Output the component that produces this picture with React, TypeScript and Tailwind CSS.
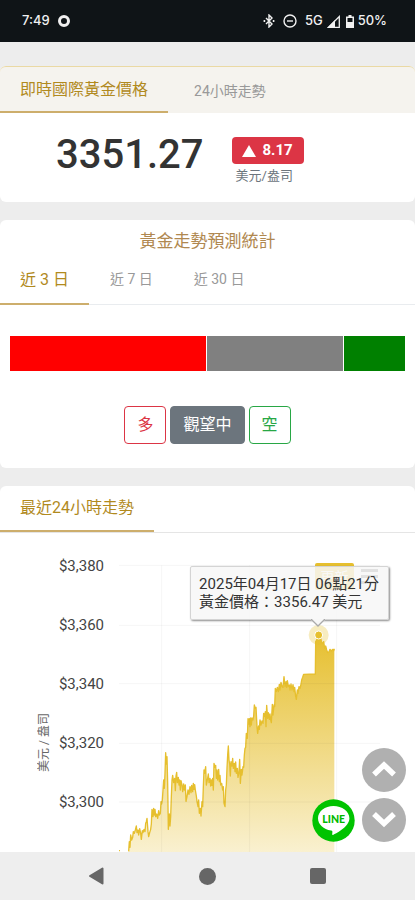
import React from "react";

type Point = [number, number];

const trend: Point[] = [
  [56, 634], [58, 605], [60, 622], [62, 585], [65, 600], [68, 592], [70, 575], [73, 580], [76, 570], [79, 558], [81, 578], [84, 570], [86, 585], [89, 566], [92, 580], [94, 598], [97, 572], [99, 578], [102, 568], [105, 575], [107, 550], [109, 545], [111, 535], [114, 575], [116, 590], [119, 578], [122, 568], [124, 552], [126, 508], [129, 530], [131, 505], [133, 525], [135, 508], [137, 530], [140, 522], [143, 535], [146, 512], [148, 525], [151, 520], [153, 485], [155, 492], [157, 480], [159, 450], [161, 420], [163, 445], [165, 400], [167, 338], [169, 372], [171, 350], [173, 430], [175, 568], [178, 522], [180, 558], [182, 530], [184, 470], [186, 420], [188, 406], [191, 428], [194, 415], [196, 452], [198, 408], [200, 397], [202, 428], [205, 412], [207, 435], [209, 420], [211, 450], [213, 422], [216, 435], [218, 455], [221, 432], [223, 450], [226, 435], [228, 484], [231, 470], [234, 450], [237, 463], [240, 440], [243, 458], [245, 436], [248, 455], [250, 430], [252, 448], [254, 434], [256, 450], [259, 468], [261, 484], [264, 500], [266, 480], [268, 520], [271, 505], [273, 528], [276, 485], [278, 500], [280, 440], [282, 390], [284, 400], [287, 380], [289, 435], [292, 420], [295, 402], [297, 428], [300, 415], [302, 438], [304, 420], [306, 436], [308, 415], [310, 450], [312, 370], [315, 382], [317, 376], [319, 415], [321, 390], [323, 420], [326, 388], [328, 425], [330, 406], [332, 435], [335, 430], [338, 450], [340, 440], [342, 490], [345, 500], [347, 450], [349, 435], [351, 385], [353, 345], [355, 318], [357, 360], [359, 372], [361, 408], [363, 365], [366, 378], [368, 355], [370, 385], [373, 370], [375, 395], [377, 366], [379, 400], [382, 385], [384, 412], [387, 395], [389, 358], [391, 430], [394, 388], [396, 405], [399, 380], [401, 382], [403, 345], [405, 325], [407, 322], [409, 280], [412, 295], [414, 236], [416, 252], [418, 236], [420, 260], [422, 234], [424, 255], [426, 234], [429, 240], [431, 228], [433, 195], [436, 205], [438, 202], [441, 260], [443, 280], [446, 258], [448, 268], [450, 240], [453, 255], [456, 243], [459, 250], [461, 220], [464, 230], [466, 215], [468, 260], [470, 196], [473, 235], [475, 218], [478, 238], [480, 222], [482, 240], [484, 248], [487, 193], [489, 225], [492, 195], [494, 200], [496, 145], [499, 155], [502, 142], [505, 155], [508, 133], [510, 150], [513, 127], [516, 140], [519, 142], [522, 110], [525, 140], [528, 125], [530, 142], [532, 122], [535, 140], [538, 135], [540, 150], [543, 132], [546, 150], [549, 134], [552, 155], [554, 142], [557, 170], [559, 178], [562, 150], [564, 160], [567, 140], [570, 145], [572, 138], [575, 120], [578, 112], [581, 103], [616, 102], [617, 5], [620, 0], [624, -24], [627, 0], [631, -12], [635, 8], [638, 10], [641, 5], [644, 25], [647, 18], [650, 30], [653, 38], [657, 35], [660, 28], [664, 33], [668, 28], [671, 32], [673, 26],
];

const line = trend.map(([x, y], i) => `${i ? "L" : "M"}${x} ${y}`).join(" ");
const area = `${line} L673 700 L56 700 Z`;

const ticks = ["$3,380", "$3,360", "$3,340", "$3,320", "$3,300"];

function StatusBar() {
  return (
    <header className="flex h-[42px] shrink-0 items-center justify-between bg-[#0f1417] pl-[22px] pr-7 font-['Inter',sans-serif] text-[13px] font-medium text-[#f0f0f0]">
      <div className="flex items-center gap-2">
        <span>7:49</span>
        <span className="size-3 rounded-full border-[3px] border-[#f0f0f0]" />
      </div>
      <div className="flex items-center">
        <svg className="mr-2 h-[14px] w-3" viewBox="0 0 12 14" fill="none" stroke="#f0f0f0" strokeWidth="1.4" aria-hidden="true">
          <path d="M3 4l6 6-3 3V1l3 3-6 6" />
          <path d="M0.6 7h1.6M9.8 7h1.6" strokeWidth="1.8" />
        </svg>
        <svg className="mr-2 size-[14px]" viewBox="0 0 14 14" fill="none" stroke="#f0f0f0" strokeWidth="1.4" aria-hidden="true">
          <circle cx="7" cy="7" r="6" />
          <path d="M4 7h6" />
        </svg>
        <span className="mr-1">5G</span>
        <svg className="mr-1.5 size-[13px]" viewBox="0 0 13 13" aria-hidden="true">
          <path d="M12.3 1.5v10.8H1.5z" fill="none" stroke="#f0f0f0" strokeWidth="1.3" />
          <path d="M0 13L8 5v8z" fill="#f0f0f0" />
        </svg>
        <svg className="mr-1 h-[13px] w-2" viewBox="0 0 8 13" aria-hidden="true">
          <path d="M2.5 0h3v1.5H8V13H0V1.5h2.5zM1.5 3v4h5V3z" fill="#f0f0f0" fillRule="evenodd" />
        </svg>
        <span>50%</span>
      </div>
    </header>
  );
}

function PriceCard() {
  return (
    <section className="rounded-md bg-white">
      <div className="flex h-[47px] gap-1.5 rounded-t-md border-t border-[#ead9a4] bg-[#f5f3ee]" role="tablist">
        <button role="tab" aria-selected="true" className="border-b-2 border-[#cdae6c] px-5 pt-0.5 text-base text-[#b18a1e]">
          即時國際黃金價格
        </button>
        <button role="tab" aria-selected="false" className="px-5 pt-0.5 text-sm text-[#999]">
          24小時走勢
        </button>
      </div>
      <div className="flex h-[89px] items-start gap-7 pl-14 pt-5">
        <strong className="pt-0.5 text-[40px] leading-10 font-medium text-[#333]">3351.27</strong>
        <div className="flex flex-col items-start pt-1">
          <span className="flex h-[27px] w-[72px] items-center justify-center gap-1.5 rounded bg-[#dc3545] text-[15px] font-bold text-white">
            <svg className="h-3 w-[14px]" viewBox="0 0 14 12" aria-hidden="true">
              <path d="M7 0l7 12H0z" fill="white" />
            </svg>
            8.17
          </span>
          <span className="pl-1 text-[13px] leading-6 text-[#6c757d]">美元/盎司</span>
        </div>
      </div>
    </section>
  );
}

function ForecastCard() {
  return (
    <section className="rounded-md bg-white">
      <h2 className="pt-[9px] text-center text-[17px] leading-6 text-[#b08850]">黃金走勢預測統計</h2>
      <div className="flex h-[52px] gap-px border-b border-[#e9ecef]" role="tablist">
        <button role="tab" aria-selected="true" className="-mb-px border-b-2 border-[#cdae6c] px-5 pt-1 text-base text-[#b18a1e]">
          近 3 日
        </button>
        <button role="tab" aria-selected="false" className="px-5 text-sm text-[#999]">
          近 7 日
        </button>
        <button role="tab" aria-selected="false" className="px-5 text-sm text-[#999]">
          近 30 日
        </button>
      </div>
      <div className="mx-[10px] mt-[31px] flex h-[35px] gap-px">
        <div className="grow-195 bg-[#ff0000]" />
        <div className="grow-136 bg-[#808080]" />
        <div className="grow-61 bg-[#008000]" />
      </div>
      <div className="flex justify-center gap-1 pt-[35px] pb-6 text-base leading-6">
        <button className="h-[38px] rounded border border-[#dc3545] px-3 text-[#dc3545]">多</button>
        <button className="h-[38px] rounded border border-[#6c757d] bg-[#6c757d] px-3 text-white">觀望中</button>
        <button className="h-[38px] rounded border border-[#28a745] px-3 text-[#28a745]">空</button>
      </div>
    </section>
  );
}

function ChartCard() {
  return (
    <section className="rounded-t-md bg-white">
      <div className="flex h-[47px] border-b border-[#e5e5e5]">
        <h2 className="flex items-center border-b-2 border-[#cdae6c] px-5 text-base text-[#b18a1e]">最近24小時走勢</h2>
      </div>
      <div className="relative flex h-80">
        <div className="flex w-[119px] shrink-0 pl-9">
          <span className="mt-[179px] h-[60px] w-4 rotate-180 text-xs leading-4 whitespace-nowrap text-[#666] [text-orientation:sideways] [writing-mode:vertical-rl]">
            美元 / 盎司
          </span>
          <ol className="grow pt-1 pr-[15px] text-right text-[15px] text-[#444]">
            {ticks.map((t) => (
              <li key={t} className="h-[59px] leading-[59px]">
                {t}
              </li>
            ))}
          </ol>
        </div>
        <svg className="h-full min-w-0 grow" viewBox="27 -321 888 960" preserveAspectRatio="none" role="img" aria-label="最近24小時走勢">
          <defs>
            <linearGradient id="gold" gradientUnits="userSpaceOnUse" x1="0" y1="-20" x2="0" y2="700">
              <stop offset="0" stopColor="#e6bf2e" />
              <stop offset="1" stopColor="#e6bf2e" stopOpacity="0.15" />
            </linearGradient>
          </defs>
          <path d={area} fill="url(#gold)" />
          <path d={line} fill="none" stroke="#e6bf2e" strokeWidth="4" strokeLinejoin="round" />
          <path d="M27 632h3" stroke="#e6bf2e" strokeWidth="4" />
          <path d="M27 -224H810M27 -44H810M27 131H810M27 310H810M27 486H810M155 -224V640M419 -224V640M680 -224V640" fill="none" stroke="#000" strokeOpacity="0.04" strokeWidth="3" />
          <circle cx="626" cy="-15" r="30" fill="#e6bf2e" fillOpacity="0.3" />
          <circle cx="626" cy="-15" r="12" fill="#e6bf2e" stroke="white" strokeWidth="3" />
        </svg>
        <button className="absolute top-[30px] right-[61px] h-[27px] w-[39px] rounded-xs bg-[#e6bf2e] text-sm text-white">更新</button>
        <button className="absolute top-9 right-[37px] flex h-[15px] w-[17px] flex-col justify-between" aria-label="選單">
          <span className="h-[3px] w-full bg-[#666]" />
          <span className="h-[3px] w-full bg-[#666]" />
          <span className="h-[3px] w-full bg-[#666]" />
        </button>
        <div className="absolute top-[33px] right-[26px] rounded-xs border border-[#d4d4d4] bg-[#f7f7f7]/85 py-2 pr-[9px] pl-2 text-[15px] leading-[18px] whitespace-nowrap text-[#333] shadow-[1px_1px_2px_rgba(0,0,0,0.45)]">
          <p>2025年04月17日 06點21分</p>
          <p>黃金價格：3356.47 美元</p>
          <svg className="absolute top-full right-[62px] h-2 w-4" viewBox="0 0 16 8" aria-hidden="true">
            <path d="M0 0l8 7 8-7z" fill="#f7f7f7" />
            <path d="M1 0l7 7 7-7" fill="none" stroke="#aaa" strokeWidth="1.3" />
          </svg>
        </div>
      </div>
    </section>
  );
}

function FloatingButtons() {
  return (
    <div className="absolute right-[9px] bottom-[58px] flex items-end gap-[7px]">
      <a href="#line" aria-label="LINE">
        <svg className="size-[43px]" viewBox="0 0 43 43">
          <circle cx="21.5" cy="21.5" r="21.2" fill="#00c300" />
          <path d="M21.5 7C13 7 6 12.400 6 19.300c0 6.200 5.600 11.200 13 12.200 1.800.3 1.500 1.200 1.200 3.600-.1.800.3 1.100 1.200.7 4-2 16-8.500 16-16.500C37.400 12.400 30 7 21.500 7z" fill="white" />
          <text x="21.700" y="23.500" textAnchor="middle" fontSize="10.500" fontWeight="900" fill="#00b900" fontFamily="Lato, sans-serif">LINE</text>
        </svg>
      </a>
      <div className="flex flex-col gap-1.5">
        <button className="size-11 rounded-full bg-[#b0b0b0]" aria-label="往上">
          <svg className="size-11" viewBox="0 0 44 44" fill="none" stroke="white" strokeWidth="5.500">
            <path d="M12 26.500L22 17l10 9.500" />
          </svg>
        </button>
        <button className="size-11 rounded-full bg-[#b0b0b0]" aria-label="往下">
          <svg className="size-11" viewBox="0 0 44 44" fill="none" stroke="white" strokeWidth="5.500">
            <path d="M12 16l10 9.500L32 16" />
          </svg>
        </button>
      </div>
    </div>
  );
}

function NavBar() {
  return (
    <nav className="flex h-12 shrink-0 items-center justify-between bg-[#eee] pr-[89px] pl-[88px]">
      <button aria-label="返回">
        <svg className="h-[18px] w-4" viewBox="0 0 16 18">
          <path d="M14.500 1.500v15L2 9z" fill="#666" stroke="#666" strokeWidth="2" strokeLinejoin="round" />
        </svg>
      </button>
      <button aria-label="主畫面" className="size-[17px] rounded-full bg-[#666]" />
      <button aria-label="最近使用" className="size-4 rounded-xs bg-[#666]" />
    </nav>
  );
}

export default function App() {
  return (
    <div className="relative flex h-screen flex-col bg-[#ededed] font-['Roboto','Noto_Sans_CJK_TC',sans-serif]">
      <StatusBar />
      <main className="flex min-h-0 grow flex-col gap-[18px] overflow-hidden pt-6 *:shrink-0">
        <PriceCard />
        <ForecastCard />
        <ChartCard />
      </main>
      <FloatingButtons />
      <NavBar />
    </div>
  );
}
